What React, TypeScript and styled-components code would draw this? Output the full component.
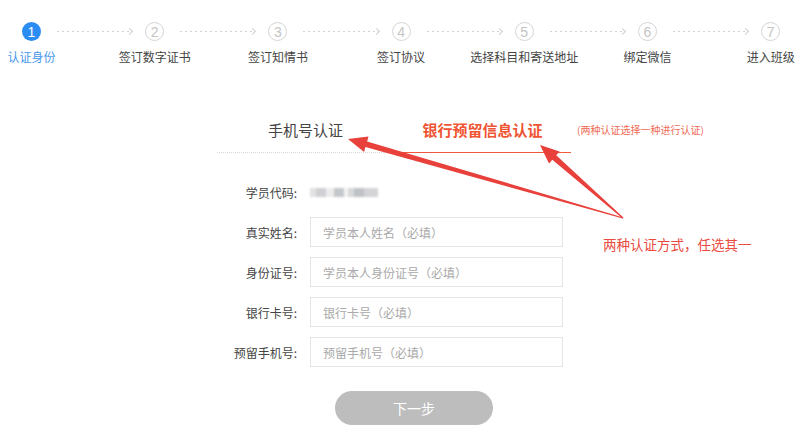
import React from 'react';
import styled, { createGlobalStyle } from 'styled-components';

const GlobalStyle = createGlobalStyle`
  html, body {
    margin: 0;
    padding: 0;
    background: #ffffff;
  }
  body {
    font-family: "Noto Sans CJK SC", "Liberation Sans", sans-serif;
  }
`;

const steps = [
  '认证身份',
  '签订数字证书',
  '签订知情书',
  '签订协议',
  '选择科目和寄送地址',
  '绑定微信',
  '进入班级',
];

const fields = [
  { label: '真实姓名:', placeholder: '学员本人姓名（必填）' },
  { label: '身份证号:', placeholder: '学员本人身份证号（必填）' },
  { label: '银行卡号:', placeholder: '银行卡号（必填）' },
  { label: '预留手机号:', placeholder: '预留手机号（必填）' },
];

type Pt = [number, number];

// tapered annotation arrow, thin at the tail and thick near the head
const arrowPoints = (tail: Pt, tip: Pt, shaft = 6, headLen = 19, headHalf = 8) => {
  const dx = tip[0] - tail[0];
  const dy = tip[1] - tail[1];
  const len = Math.hypot(dx, dy);
  const ux = dx / len;
  const uy = dy / len;
  const nx = -uy;
  const ny = ux;
  const bx = tip[0] - ux * headLen;
  const by = tip[1] - uy * headLen;
  const pts: Pt[] = [
    [tail[0] + nx * 0.6, tail[1] + ny * 0.6],
    [bx + (nx * shaft) / 2, by + (ny * shaft) / 2],
    [bx + nx * headHalf, by + ny * headHalf],
    tip,
    [bx - nx * headHalf, by - ny * headHalf],
    [bx - (nx * shaft) / 2, by - (ny * shaft) / 2],
    [tail[0] - nx * 0.6, tail[1] - ny * 0.6],
  ];
  return pts.map((p) => `${p[0].toFixed(1)},${p[1].toFixed(1)}`).join(' ');
};

export default function App() {
  return (
    <Page>
      <GlobalStyle />
      <StepList>
        {steps.map((name, i) => (
          <Step key={name} last={i === steps.length - 1}>
            <CircleRow>
              <Circle active={i === 0}>{i + 1}</Circle>
              {i < steps.length - 1 && <Connector />}
            </CircleRow>
            <LabelAnchor>
              <StepLabel active={i === 0}>{name}</StepLabel>
            </LabelAnchor>
          </Step>
        ))}
      </StepList>

      <TabRow>
        <TabBox>
          <Tab>手机号认证</Tab>
          <Tab active>银行预留信息认证</Tab>
        </TabBox>
        <Hint>(两种认证选择一种进行认证)</Hint>
      </TabRow>

      <Form>
        <FieldRow>
          <FieldLabel>学员代码:</FieldLabel>
          <Blurred>
            <Block w={6} shade="#e2e2e2" />
            <Block w={10} shade="#cfcfd4" />
            <Block w={8} shade="#ececec" />
            <Block w={10} shade="#c4c7cc" />
            <Block w={4} shade="#f4f4f4" />
            <Block w={6} shade="#d8d8da" />
            <Block w={10} shade="#bfc2c6" />
            <Block w={14} shade="#d4d4d6" />
          </Blurred>
        </FieldRow>
        {fields.map((f) => (
          <FieldRow key={f.label}>
            <FieldLabel>{f.label}</FieldLabel>
            <Input placeholder={f.placeholder} />
          </FieldRow>
        ))}
        <NextButton type="button">下一步</NextButton>
      </Form>

      <Note>两种认证方式，任选其一</Note>
      <Overlay width="800" height="444" viewBox="0 0 800 444">
        <polygon points={arrowPoints([623, 218], [348, 139])} fill="#e8413b" />
        <polygon points={arrowPoints([623, 218], [540, 145], 6, 19, 8)} fill="#e8413b" />
      </Overlay>
    </Page>
  );
}

const Page = styled.div`
  position: relative;
  width: 800px;
  height: 444px;
  overflow: hidden;
  background: #ffffff;
`;

const StepList = styled.div`
  display: flex;
  padding: 22px 0 0 22px;
`;

const Step = styled.div<{ last?: boolean }>`
  width: ${(p) => (p.last ? 'auto' : '123.2px')};
  display: flex;
  flex-direction: column;
  align-items: flex-start;
  gap: 8px;
`;

const CircleRow = styled.div`
  display: flex;
  align-items: center;
  width: 100%;
`;

const Circle = styled.div<{ active?: boolean }>`
  width: 19px;
  height: 19px;
  box-sizing: border-box;
  border-radius: 50%;
  flex-shrink: 0;
  display: flex;
  align-items: center;
  justify-content: center;
  font-family: "Liberation Sans", sans-serif;
  font-size: 14px;
  background: ${(p) => (p.active ? '#2b8cf2' : '#ffffff')};
  color: ${(p) => (p.active ? '#ffffff' : '#c4c4c4')};
  border: ${(p) => (p.active ? 'none' : '1.5px solid #d6d6d6')};
`;

const Connector = styled.div`
  position: relative;
  flex: 1;
  height: 1px;
  margin: 0 13px 0 16px;
  background: repeating-linear-gradient(
    to right,
    #d3d3d3 0 2px,
    transparent 2px 5px
  );

  &::after {
    content: '';
    position: absolute;
    right: 0;
    top: -2px;
    width: 4px;
    height: 4px;
    border-top: 1px solid #d0d0d0;
    border-right: 1px solid #d0d0d0;
    transform: rotate(45deg);
  }
`;

const LabelAnchor = styled.div`
  width: 19px;
  display: flex;
  justify-content: center;
`;

const StepLabel = styled.span<{ active?: boolean }>`
  white-space: nowrap;
  font-size: 12px;
  line-height: 16px;
  color: ${(p) => (p.active ? '#4a98ec' : '#444444')};
`;

const TabRow = styled.div`
  display: flex;
  align-items: flex-start;
  margin: 55px 0 0 217px;
`;

const TabBox = styled.div`
  display: flex;
  width: 354px;
`;

const Tab = styled.div<{ active?: boolean }>`
  flex: 1;
  text-align: center;
  font-size: 15px;
  line-height: 20px;
  padding-bottom: 12px;
  font-weight: ${(p) => (p.active ? 700 : 400)};
  color: ${(p) => (p.active ? '#ef5533' : '#444444')};
  border-bottom: 1px ${(p) => (p.active ? 'solid #f05a3c' : 'dotted #d8d8d8')};
`;

const Hint = styled.div`
  margin-left: 6px;
  font-size: 10px;
  line-height: 20px;
  color: #f06a55;
  white-space: nowrap;
`;

const Form = styled.div`
  display: flex;
  flex-direction: column;
  gap: 10px;
  margin: 24px 0 0 217px;
`;

const FieldRow = styled.div`
  display: flex;
  align-items: center;
  height: 30px;
  gap: 13px;
`;

const FieldLabel = styled.div`
  width: 80px;
  text-align: right;
  font-size: 12px;
  color: #444444;
  white-space: nowrap;
`;

const Blurred = styled.div`
  display: flex;
  height: 9px;
  filter: blur(0.8px);
`;

const Block = styled.span<{ w: number; shade: string }>`
  display: block;
  width: ${(p) => p.w}px;
  height: 100%;
  background: ${(p) => p.shade};
`;

const Input = styled.input`
  width: 253px;
  height: 30px;
  box-sizing: border-box;
  border: 1px solid #e4e4e4;
  padding: 0 12px;
  font-family: "Noto Sans CJK SC", "Liberation Sans", sans-serif;
  font-size: 12px;
  color: #333333;
  outline: none;

  &::placeholder {
    color: #a9a9a9;
  }
`;

const NextButton = styled.button`
  width: 158px;
  height: 34px;
  margin: 14px 0 0 118px;
  border: none;
  border-radius: 17px;
  background: #bdbdbd;
  color: #ffffff;
  font-family: "Noto Sans CJK SC", "Liberation Sans", sans-serif;
  font-size: 14px;
`;

const Note = styled.div`
  position: absolute;
  left: 603px;
  top: 234px;
  font-size: 13.5px;
  line-height: 20px;
  color: #ea4a40;
  white-space: nowrap;
`;

const Overlay = styled.svg`
  position: absolute;
  left: 0;
  top: 0;
  pointer-events: none;
`;
